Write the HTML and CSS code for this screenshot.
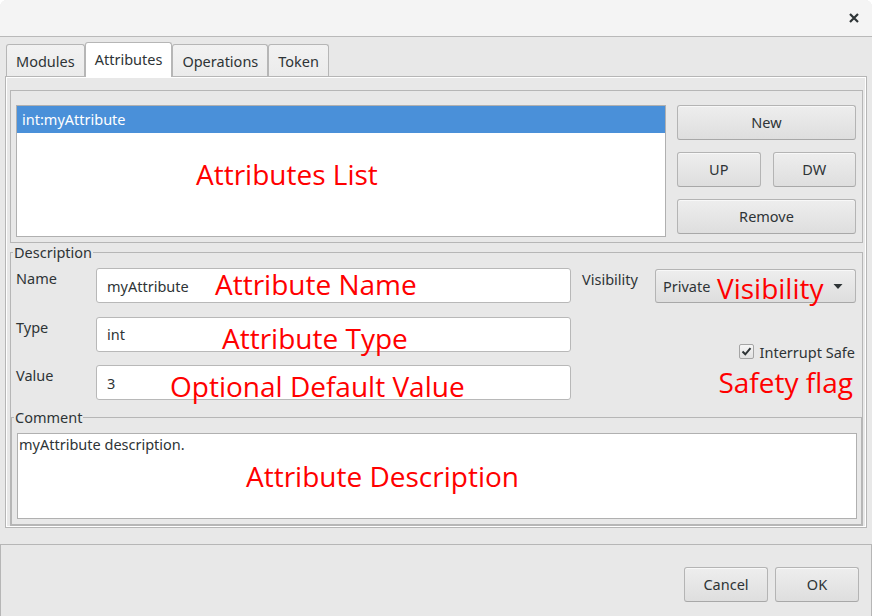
FILE: index.html
```html
<!DOCTYPE html>
<html lang="en">
<head>
<meta charset="utf-8">
<title>Attributes</title>
<link rel="stylesheet" href="styles.css">
</head>
<body>
<div class="window">
  <header class="titlebar">
    <button class="close" aria-label="Close">
      <svg width="10" height="10" viewBox="0 0 10 10"><path d="M1 1L9 9M9 1L1 9" stroke="#2e3436" stroke-width="2.2" stroke-linecap="butt"/></svg>
    </button>
  </header>
  <main class="content">
    <nav class="tabs">
      <div class="tab">Modules</div>
      <div class="tab active">Attributes</div>
      <div class="tab">Operations</div>
      <div class="tab">Token</div>
    </nav>
    <section class="pane">
      <div class="list-group">
        <div class="list">
          <div class="row selected">int:myAttribute</div>
          <span class="note note-list">Attributes List</span>
        </div>
        <div class="list-buttons">
          <button class="btn">New</button>
          <div class="btn-pair">
            <button class="btn">UP</button>
            <button class="btn">DW</button>
          </div>
          <button class="btn">Remove</button>
        </div>
      </div>
      <fieldset class="desc">
        <legend>Description</legend>
        <div class="form">
          <label class="lbl">Name</label>
          <div class="field">myAttribute<span class="note note-name">Attribute Name</span></div>
          <label class="lbl lbl-vis">Visibility</label>
          <div class="combo">
            <span>Private</span>
            <span class="note note-vis">Visibility</span>
            <svg class="arrow" width="10" height="5" viewBox="0 0 10 5"><path d="M0.5 0H9.5L5 5Z" fill="#2e3436"/></svg>
          </div>
          <label class="lbl">Type</label>
          <div class="field">int<span class="note note-type">Attribute Type</span></div>
          <div class="flags">
            <div class="check">
              <span class="box"><svg width="11" height="11" viewBox="0 0 11 11"><path d="M1.5 5.5L4.3 8.3L9.5 2.2" fill="none" stroke="#2e3436" stroke-width="2"/></svg></span>
              <span>Interrupt Safe</span>
            </div>
            <span class="note note-flag">Safety flag</span>
          </div>
          <label class="lbl">Value</label>
          <div class="field">3<span class="note note-value">Optional Default Value</span></div>
        </div>
        <fieldset class="comment">
          <legend>Comment</legend>
          <div class="textarea">myAttribute description.<span class="note note-desc">Attribute Description</span></div>
        </fieldset>
      </fieldset>
    </section>
  </main>
  <footer class="actions">
    <button class="btn btn-foot">Cancel</button>
    <button class="btn btn-foot">OK</button>
  </footer>
</div>
</body>
</html>
```
FILE: styles.css
```css
* { box-sizing: border-box; }
html, body { margin: 0; padding: 0; }
body {
  width: 872px;
  height: 616px;
  overflow: hidden;
  background: #ffffff;
  font-family: "Noto Sans", "Open Sans", sans-serif;
  font-size: 14.5px;
  line-height: 20px;
  color: #2e3436;
}
.window {
  width: 872px;
  height: 616px;
  background: #e8e8e8;
  display: flex;
  flex-direction: column;
  border-radius: 7px 7px 0 0;
  overflow: hidden;
}
.titlebar {
  flex: none;
  height: 37px;
  background: #f4f4f4;
  border-bottom: 1px solid #b9b9b9;
  display: flex;
  justify-content: flex-end;
  align-items: center;
  padding-right: 13px;
}
.close {
  border: 0;
  background: none;
  padding: 0;
  width: 10px;
  height: 10px;
  display: flex;
}
.content {
  flex: none;
  padding: 7px 5px 16px 5px;
}
.tabs {
  display: flex;
  align-items: flex-end;
  height: 32px;
  margin-left: 1px;
  position: relative;
  z-index: 1;
}
.tab {
  height: 32px;
  padding: 0 9px 0 9px;
  border: 1px solid #b6b6b6;
  border-bottom: 0;
  border-radius: 3px 3px 0 0;
  background: linear-gradient(#f2f2f2, #ebebeb);
  display: flex;
  align-items: center;
}
.tab.active {
  height: 35px;
  margin-bottom: -1px;
  background: #ffffff;
  padding-bottom: 2px;
}
.pane {
  border: 1px solid #b6b6b6;
  box-shadow: inset 0 0 0 1px #ffffff;
  padding: 13px 3px 1px 4px;
}
.list-group {
  border: 1px solid #b6b6b6;
  display: flex;
  gap: 11px;
  padding: 14px 6px 5px 5px;
}
.list {
  position: relative;
  width: 650px;
  height: 132px;
  background: #ffffff;
  border: 1px solid #b0b0b0;
}
.row.selected {
  height: 27px;
  line-height: 27px;
  padding-left: 5px;
  background: #4a90d9;
  color: #ffffff;
}
.list-buttons {
  width: 179px;
  display: flex;
  flex-direction: column;
  gap: 12px;
}
.btn-pair {
  display: flex;
  gap: 12px;
}
.btn-pair .btn { flex: 1; }
.btn {
  height: 35px;
  margin: 0;
  padding: 0 0 2px 0;
  font: inherit;
  color: #2e3436;
  border: 1px solid #b4b4b4;
  border-bottom-color: #a8a8a8;
  border-radius: 3px;
  background: linear-gradient(#eeeeee, #dedede);
  box-shadow: inset 0 1px 0 #f8f8f8;
}
.desc {
  margin: 1px 0 0 0;
  padding: 0;
  border: 1px solid #b6b6b6;
  min-width: 0;
}
legend {
  margin-left: 2px;
  padding: 0 1px;
  line-height: 16px;
}
.form {
  display: grid;
  grid-template-columns: 80px 475px 1fr 201px;
  grid-template-rows: 35px 35px 35px;
  row-gap: 13.5px;
  padding: 8px 6px 0 5px;
}
.lbl { display: block; }
.lbl-vis { padding-left: 11px; padding-top: 1px; }
.field {
  position: relative;
  display: flex;
  align-items: center;
  padding-left: 10px;
  background: #ffffff;
  border: 1px solid #b8b8b8;
  border-radius: 3px;
}
.combo {
  position: relative;
  display: flex;
  align-items: center;
  height: 34px;
  margin-top: 1px;
  padding: 0 12px 0 7px;
  border: 1px solid #b4b4b4;
  border-bottom-color: #a8a8a8;
  border-radius: 3px;
  background: linear-gradient(#eeeeee, #dedede);
  box-shadow: inset 0 1px 0 #f8f8f8;
}
.arrow { margin-left: auto; margin-top: 1px; }
.flags {
  grid-column: 3 / 5;
  grid-row: 2 / 4;
  display: flex;
  flex-direction: column;
  align-items: flex-end;
  padding-top: 25px;
  padding-right: 1px;
}
.check {
  display: flex;
  align-items: center;
  gap: 6px;
  height: 20px;
}
.box {
  width: 15px;
  height: 15px;
  border: 1px solid #a5a5a5;
  border-radius: 2px;
  background: linear-gradient(#f6f6f6, #e2e2e2);
  display: flex;
  align-items: center;
  justify-content: center;
}
.comment {
  margin: 9px 0 0 0;
  padding: 0;
  border: 1px solid #b6b6b6;
  min-width: 0;
}
.textarea {
  position: relative;
  height: 86px;
  margin: 8px 4px 5px 5px;
  padding: 0 1px;
  background: #ffffff;
  border: 1px solid #b0b0b0;
}
.actions {
  flex: 1;
  display: flex;
  justify-content: flex-end;
  align-items: flex-start;
  gap: 7px;
  padding: 22px 12px 0 0;
  border: 1px solid #b6b6b6;
  border-bottom: 0;
}
.btn-foot { width: 84px; }

/* red annotations laid over the widgets */
.note {
  position: absolute;
  font-family: "Open Sans", "Noto Sans", sans-serif;
  font-size: 28px;
  line-height: 38px;
  color: #ff0000;
  white-space: nowrap;
}
.note-list { left: 179px; top: 49px; }
.note-name { left: 118px; top: -4px; }
.note-type { left: 125px; top: 1px; }
.note-value { left: 73px; top: 1px; }
.note-vis { left: 61px; top: -1px; }
.note-desc { left: 228px; top: 23px; }
.note-flag {
  position: static;
  margin-top: 1px;
  margin-right: 2px;
}
```
